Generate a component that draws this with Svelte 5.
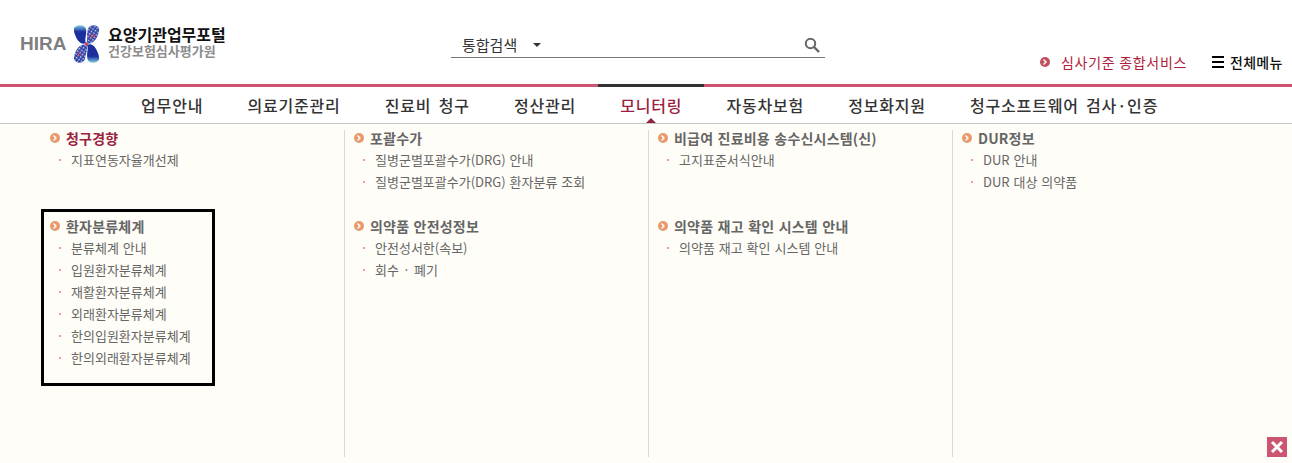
<script>
  const nav = [
    { label: '업무안내' },
    { label: '의료기준관리' },
    { label: '진료비 청구' },
    { label: '정산관리' },
    { label: '모니터링', active: true },
    { label: '자동차보험' },
    { label: '정보화지원' },
    { label: '청구소프트웨어 검사·인증' }
  ];

  const columns = [
    [
      { title: '청구경향', hot: true, items: ['지표연동자율개선제'] },
      { title: '환자분류체계', marked: true, items: ['분류체계 안내', '입원환자분류체계', '재활환자분류체계', '외래환자분류체계', '한의입원환자분류체계', '한의외래환자분류체계'] }
    ],
    [
      { title: '포괄수가', items: ['질병군별포괄수가(DRG) 안내', '질병군별포괄수가(DRG) 환자분류 조회'] },
      { title: '의약품 안전성정보', items: ['안전성서한(속보)', '회수 · 폐기'] }
    ],
    [
      { title: '비급여 진료비용 송수신시스템(신)', items: ['고지표준서식안내'] },
      { title: '의약품 재고 확인 시스템 안내', items: ['의약품 재고 확인 시스템 안내'] }
    ],
    [
      { title: 'DUR정보', items: ['DUR 안내', 'DUR 대상 의약품'] }
    ]
  ];
</script>

<div class="page">
  <header class="top">
    <div class="logo">
      <span class="hira">HIRA</span>
      <svg class="mark" width="27" height="38" viewBox="0 0 27 38">
        <defs>
          <linearGradient id="blade" x1="0" y1="0" x2="0" y2="1">
            <stop offset="0" stop-color="#7fd0e6" />
            <stop offset="0.35" stop-color="#1c2f9c" />
            <stop offset="1" stop-color="#1c2f9c" />
          </linearGradient>
          <linearGradient id="bladeUp" x1="0" y1="1" x2="0" y2="0">
            <stop offset="0" stop-color="#7fd0e6" />
            <stop offset="0.35" stop-color="#1c2f9c" />
            <stop offset="1" stop-color="#1c2f9c" />
          </linearGradient>
          <pattern id="check" width="3" height="3" patternUnits="userSpaceOnUse" patternTransform="rotate(35)">
            <rect width="3" height="3" fill="#2c3fa6" />
            <rect width="1.500" height="1.500" fill="#cfd8f0" />
          </pattern>
        </defs>
        <path d="M2 2 C6 -1 12 0 13 4 C14 10 11 15 13 18 C9 20 5 17 3 12 C1 8 0 4 2 2Z" fill="url(#blade)" />
        <path d="M25 2 C22 -1 16 0 15 4 C13 10 15 14 13.500 18 C18 20 22 16 24 12 C26 8 27 4 25 2Z" fill="url(#check)" />
        <path d="M2 36 C5 39 11 38 12 34 C13 28 15 24 13.500 20 C9 18 5 22 3 26 C1 30 0 34 2 36Z" fill="url(#check)" />
        <path d="M25 36 C21 39 15 38 14.500 34 C13 28 16 24 14 20 C18 18 22 21 24 26 C26 30 27 34 25 36Z" fill="url(#bladeUp)" />
        <path d="M16 11 L19 9 M17.500 13 L23 10" stroke="#d8324a" stroke-width="1" />
        <path d="M4 29 L8 26 M5 31 L8 30" stroke="#d8324a" stroke-width="1" />
        <circle cx="13.500" cy="19" r="1.500" fill="#d8324a" />
      </svg>
      <div class="logo-text">
        <strong>요양기관업무포털</strong>
        <span>건강보험심사평가원</span>
      </div>
    </div>

    <div class="search">
      <span class="scope">통합검색</span>
      <span class="caret"></span>
      <svg class="glass" width="16" height="16" viewBox="0 0 16 16">
        <circle cx="6.500" cy="6.500" r="4.700" fill="none" stroke="#666" stroke-width="2" />
        <path d="M10 10 L15 15" stroke="#666" stroke-width="2.400" />
      </svg>
    </div>

    <div class="top-links">
      <a class="review" href="#top">
        <span class="bullet red"><svg width="6" height="6" viewBox="0 0 6 6"><path d="M1.500 .5 L4 3 L1.500 5.500" fill="none" stroke="#fff" stroke-width="1.400" /></svg></span>
        심사기준 종합서비스
      </a>
      <a class="all" href="#top">
        <span class="burger"></span>
        전체메뉴
      </a>
    </div>
  </header>

  <nav class="gnb">
    {#each nav as item}
      <a href="#top" class:active={item.active}>{item.label}</a>
    {/each}
  </nav>

  <main class="panel">
    {#each columns as col}
      <section class="col">
        {#each col as group}
          <div class="group">
            <h3 class:hot={group.hot}>
              <span class="bullet orange"><svg width="6" height="6" viewBox="0 0 6 6"><path d="M1.500 .5 L4 3 L1.500 5.500" fill="none" stroke="#fff" stroke-width="1.400" /></svg></span>
              {group.title}
            </h3>
            <ul>
              {#each group.items as entry}
                <li>{entry}</li>
              {/each}
            </ul>
            {#if group.marked}<div class="marker"></div>{/if}
          </div>
        {/each}
      </section>
    {/each}
    <button class="close" aria-label="닫기">
      <svg width="14" height="14" viewBox="0 0 14 14"><path d="M2 2 L12 12 M12 2 L2 12" stroke="#fff" stroke-width="3" /></svg>
    </button>
  </main>
</div>

<style>
  :global(body) {
    margin: 0;
    background: #fff;
  }

  .page {
    height: 463px;
    display: flex;
    flex-direction: column;
    overflow: hidden;
    font-family: "Noto Sans CJK KR", "Noto Sans", sans-serif;
    color: #555;
  }

  a {
    text-decoration: none;
    color: inherit;
  }

  .top {
    height: 84px;
    flex: none;
    display: flex;
  }

  .logo {
    width: 451px;
    flex: none;
    box-sizing: border-box;
    padding: 25px 0 0 20px;
    display: flex;
    align-items: flex-start;
  }

  .hira {
    font: bold 19px "Liberation Sans", sans-serif;
    color: #7f7f7f;
    margin-top: 8px;
    width: 53px;
  }

  .mark {
    margin-right: 8px;
  }

  .logo-text {
    display: flex;
    flex-direction: column;
  }

  .logo-text strong {
    font-size: 16px;
    line-height: 18px;
    color: #111;
    white-space: nowrap;
  }

  .logo-text span {
    font-size: 13px;
    line-height: 16px;
    font-weight: 700;
    color: #8c8c8c;
    white-space: nowrap;
  }

  .search {
    width: 374px;
    height: 22px;
    flex: none;
    margin-top: 35px;
    border-bottom: 1px solid #777;
    display: flex;
    align-items: center;
    font-size: 15px;
    color: #333;
  }

  .scope {
    margin: 0 0 2px 11px;
    line-height: 20px;
  }

  .caret {
    margin: 0 0 3px 16px;
    border: 4px solid transparent;
    border-top: 4px solid #333;
    border-bottom: 0;
  }

  .glass {
    margin: 0 5px 2px auto;
  }

  .top-links {
    flex: 1;
    display: flex;
    align-items: flex-start;
    padding: 52px 0 0 215px;
    font-size: 14px;
    line-height: 20px;
    white-space: nowrap;
  }

  .review {
    display: flex;
    align-items: center;
    gap: 11px;
    color: #b0203c;
    width: 172px;
    letter-spacing: 0.7px;
  }

  .all {
    display: flex;
    align-items: center;
    gap: 6px;
    color: #111;
    font-weight: 500;
    letter-spacing: 0.3px;
  }

  .burger {
    width: 12px;
    height: 2px;
    border-top: 2px solid #000;
    border-bottom: 2px solid #000;
    padding: 3px 0;
    background: #000;
    background-clip: content-box;
  }

  .bullet {
    width: 10px;
    height: 10px;
    border-radius: 50%;
    display: inline-flex;
    align-items: center;
    justify-content: center;
    flex: none;
  }

  .bullet.red {
    background: #c0505f;
  }

  .bullet.orange {
    background: #e89a6c;
  }

  .gnb {
    height: 39px;
    flex: none;
    box-sizing: border-box;
    border-top: 3px solid #cc5672;
    display: flex;
    padding-left: 119px;
    font-size: 16px;
    letter-spacing: 0.8px;
    word-spacing: 3px;
    font-weight: 500;
    color: #333;
  }

  .gnb a {
    position: relative;
    padding: 0 22.1px;
    line-height: 36px;
    white-space: nowrap;
    height: 36px;
  }

  .gnb a.active {
    color: #9a1f40;
    margin-top: -3px;
    border-top: 3px solid #333;
  }

  .gnb a.active::after {
    content: "";
    position: absolute;
    left: 50%;
    bottom: 0;
    margin-left: -5px;
    border: 5px solid transparent;
    border-bottom: 5px solid #8e2440;
    border-top: 0;
  }

  .panel {
    flex: 1;
    position: relative;
    display: grid;
    grid-template-columns: repeat(4, 304px);
    padding: 6px 0 6px 41px;
    background: #fffdf7;
    border-top: 1px solid #c8c8c8;
  }

  .col {
    box-sizing: border-box;
    padding-left: 9px;
    border-right: 1px solid #d8d8d8;
  }

  .col:last-of-type {
    border-right: 0;
  }

  .group {
    position: relative;
    height: 88px;
  }

  h3 {
    margin: 0;
    font-size: 14px;
    font-weight: 700;
    line-height: 16px;
    color: #666;
    display: flex;
    align-items: center;
    gap: 6px;
    height: 16px;
    white-space: nowrap;
    letter-spacing: 0.2px;
    word-spacing: 1px;
  }

  h3.hot {
    color: #9a1f40;
  }

  ul {
    list-style: none;
    margin: 0;
    padding: 3px 0 0 8px;
  }

  li {
    position: relative;
    font-size: 13px;
    line-height: 22px;
    height: 22px;
    padding-left: 13px;
    color: #666;
    white-space: nowrap;
    word-spacing: 1px;
  }

  li::before {
    content: "";
    position: absolute;
    left: 1px;
    top: 10px;
    width: 2px;
    height: 2px;
    background: #f09aa8;
  }

  .marker {
    position: absolute;
    left: -9px;
    top: -9px;
    width: 168px;
    height: 171px;
    border: 3px solid #000;
    pointer-events: none;
  }

  .close {
    position: absolute;
    right: 5px;
    bottom: 6px;
    width: 20px;
    height: 20px;
    padding: 0;
    border: 0;
    background: #cc5672;
    display: flex;
    align-items: center;
    justify-content: center;
  }
</style>
